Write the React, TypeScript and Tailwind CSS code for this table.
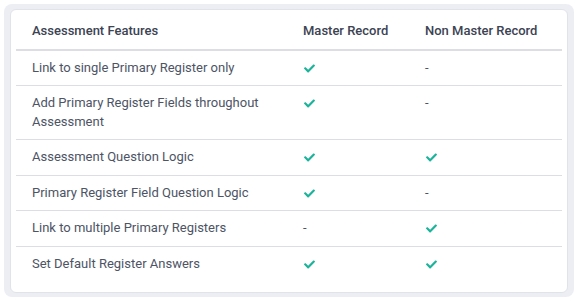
import { FaCheck } from "react-icons/fa";

const rows: { label: string; master: boolean; non: boolean }[] = [
  { label: "Link to single Primary Register only", master: true, non: false },
  { label: "Add Primary Register Fields throughout Assessment", master: true, non: false },
  { label: "Assessment Question Logic", master: true, non: true },
  { label: "Primary Register Field Question Logic", master: true, non: false },
  { label: "Link to multiple Primary Registers", master: false, non: true },
  { label: "Set Default Register Answers", master: true, non: true },
];

function Mark({ on }: { on: boolean }) {
  return on ? (
    <FaCheck className="text-[#1bb39a] w-[11px] h-[11px] mt-[4px] ml-[1px]" />
  ) : (
    <span className="text-[#4b5263]">-</span>
  );
}

export default function App() {
  return (
    <div className="w-[578px] h-[301px] bg-white p-[4px] font-['Roboto',sans-serif]">
      <div className="rounded-[8px] bg-[#eceef4] p-[6px] pt-[5px] pb-[4px] pr-[6px]">
        <div className="rounded-[6px] bg-white border border-[#e0e3ea] px-[5px] pt-[3px] pb-[11px]">
          <table className="w-full border-collapse text-[13px] leading-[18.5px]">
            <thead>
              <tr className="border-b-2 border-[#dcdee3] text-left text-[#3c4353]">
                <th className="font-medium w-[271px] pl-[16px] pt-[9px] pb-[8px]">Assessment Features</th>
                <th className="font-medium w-[122px] pl-[16px] pt-[9px] pb-[8px]">Master Record</th>
                <th className="font-medium pl-[16px] pt-[9px] pb-[8px]">Non Master Record</th>
              </tr>
            </thead>
            <tbody className="text-[#4d5465]">
              {rows.map((r, i) => (
                <tr key={r.label} className={i < rows.length - 1 ? "border-b border-[#dcdee3]" : ""}>
                  <td className="pl-[16px] pr-[16px] py-[8px] align-top">{r.label}</td>
                  <td className="pl-[16px] py-[8px] align-top">
                    <Mark on={r.master} />
                  </td>
                  <td className="pl-[16px] py-[8px] align-top">
                    <Mark on={r.non} />
                  </td>
                </tr>
              ))}
            </tbody>
          </table>
        </div>
      </div>
    </div>
  );
}
